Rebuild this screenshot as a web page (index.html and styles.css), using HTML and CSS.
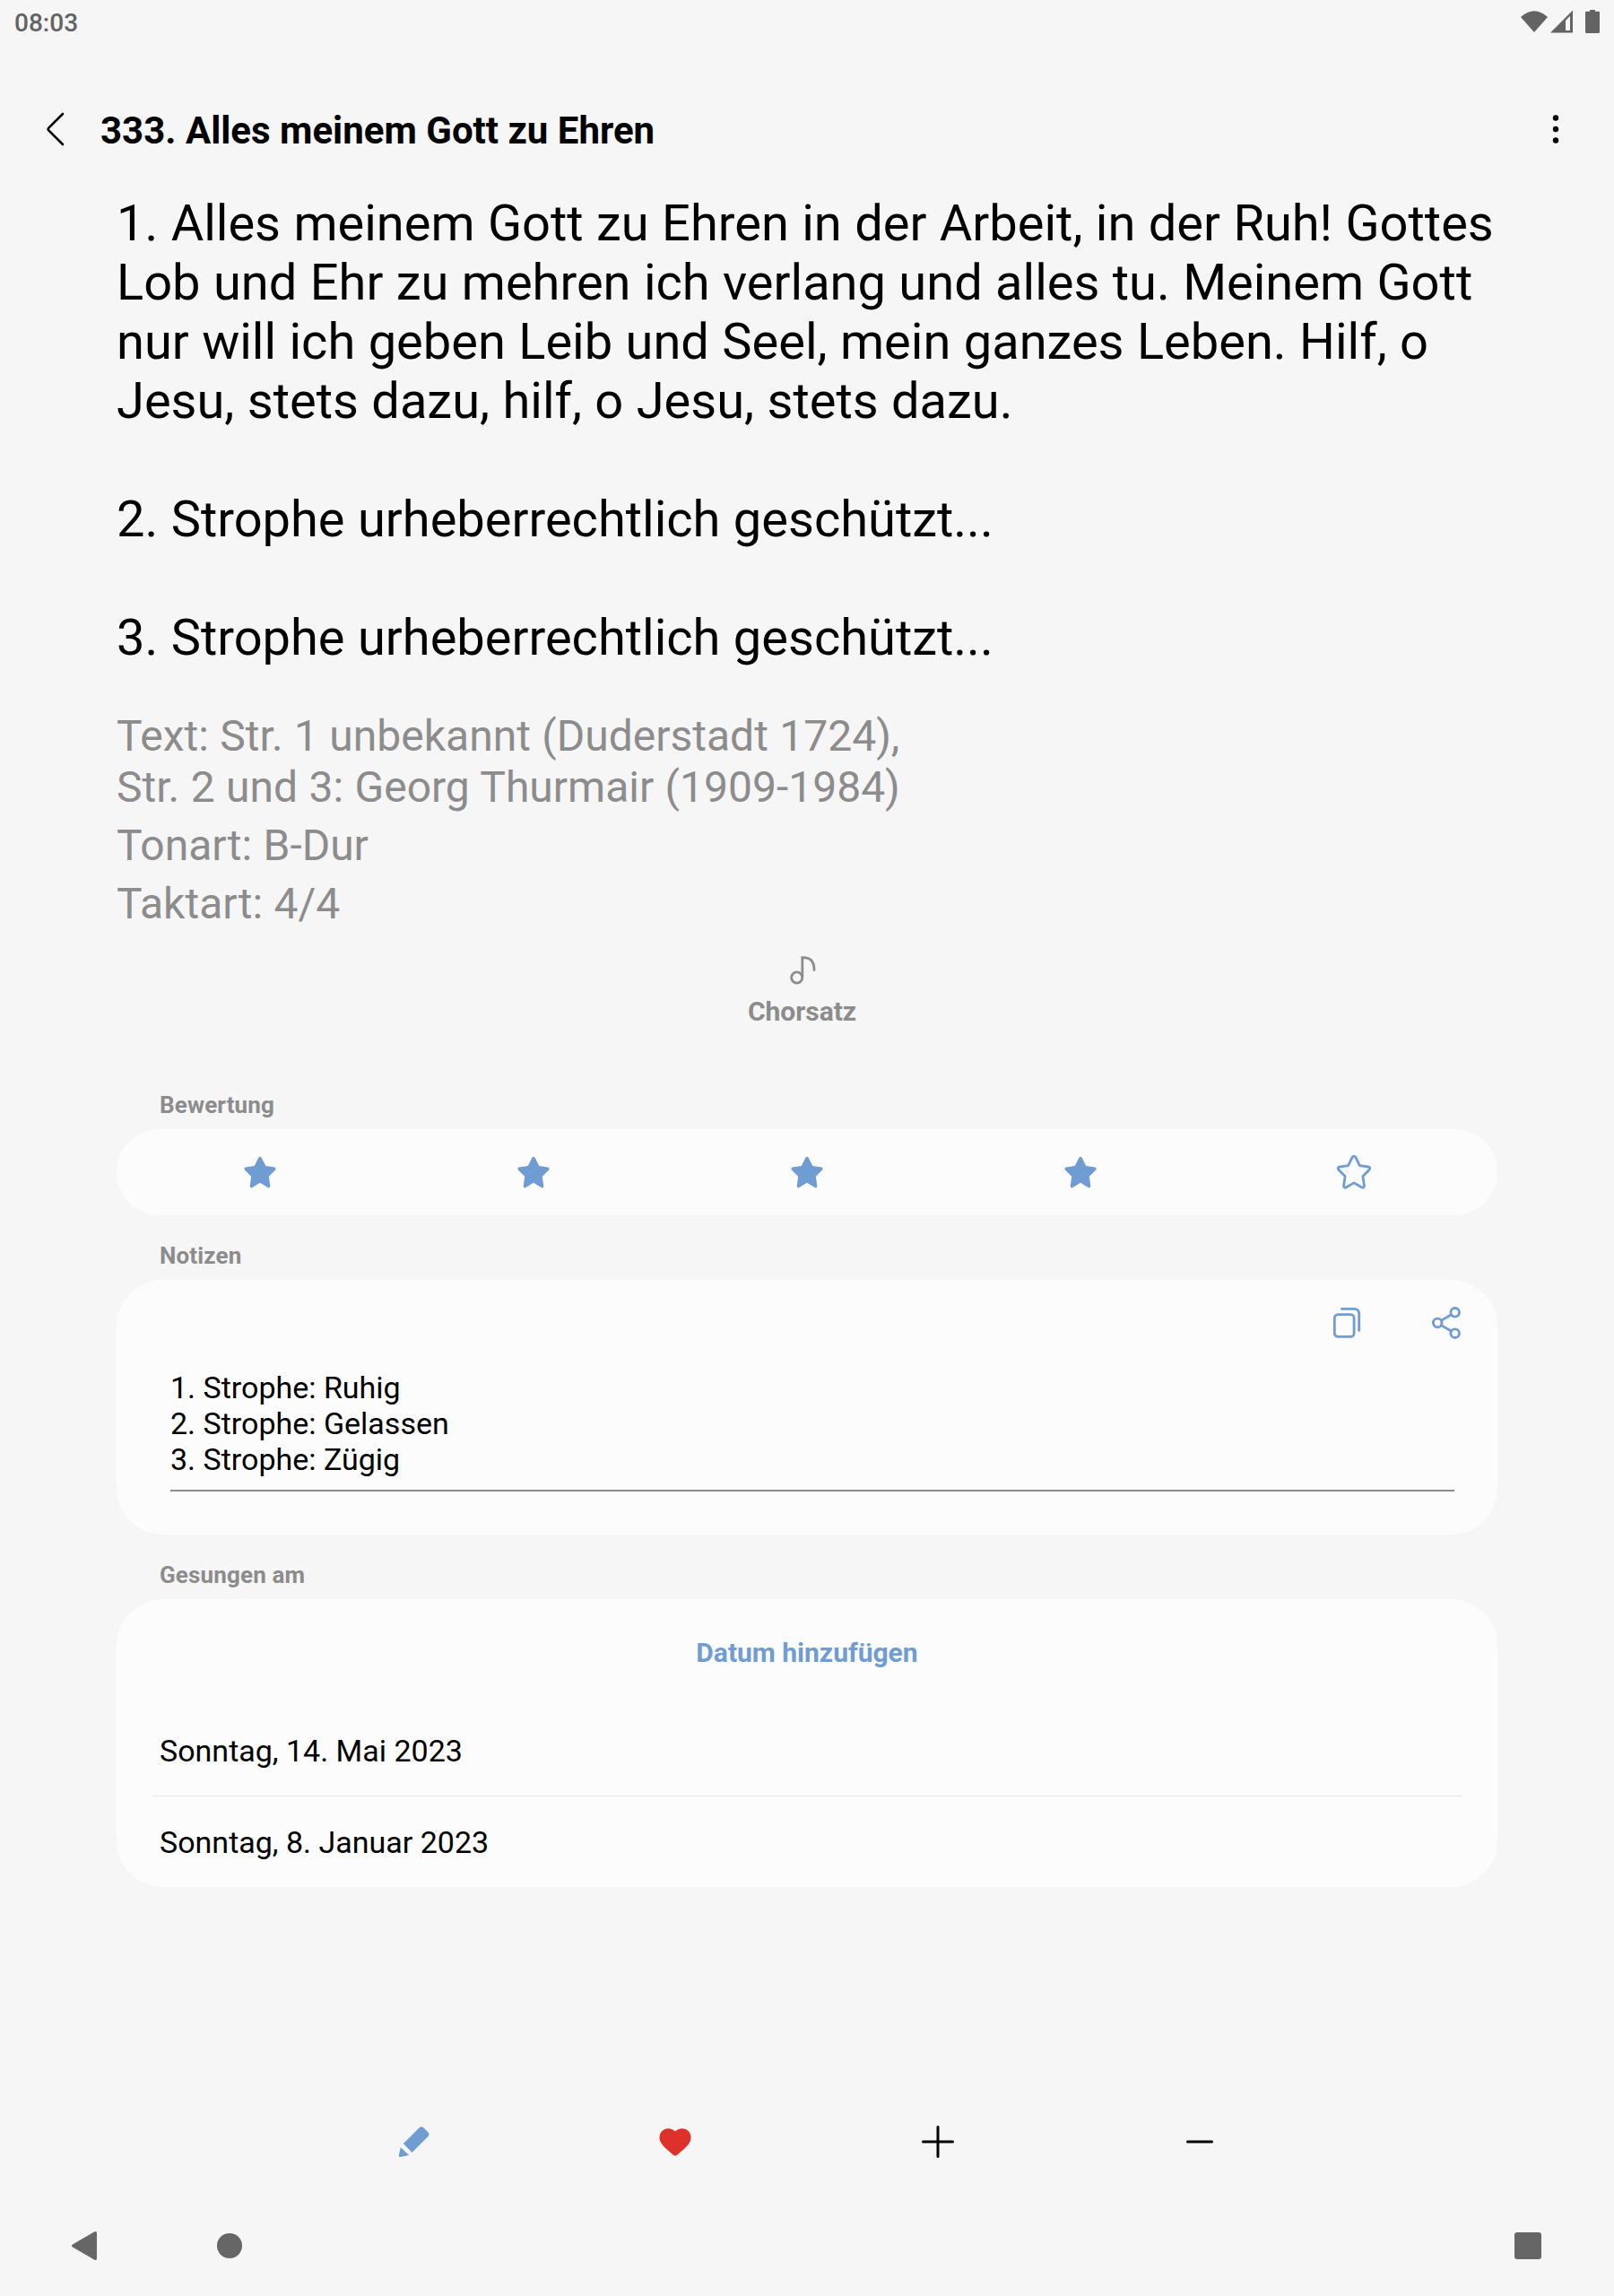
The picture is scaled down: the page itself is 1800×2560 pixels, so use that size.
FILE: index.html
```html
<!DOCTYPE html>
<html lang="de">
<head>
<meta charset="utf-8">
<title>333. Alles meinem Gott zu Ehren</title>
<link rel="stylesheet" href="styles.css">
</head>
<body>
<div class="screen">
  <header class="status">
    <span class="clock">08:03</span>
    <svg class="status-icons" width="90" height="28" viewBox="0 0 90 28" fill="#636363">
      <path d="M0 8Q15-5.5 30 8L15 25Z"/>
      <path d="M33 25.500L58 .5v25Z"/>
      <path d="M50 12l5-5.200V23h-5Z" fill="#f6f6f6"/>
      <path d="M73 1.800h4V0h6v1.800h4Q88 1.800 88 3v21.500q0 1.500-1.500 1.500h-13q-1.500 0-1.500-1.500V3Q72 1.800 73 1.800Z"/>
    </svg>
  </header>
  <div class="appbar">
    <svg class="back" width="24" height="40" viewBox="0 0 24 40"><path d="M20 3L4.300 18.600Q3 20 4.300 21.400L20 37" fill="none" stroke="#000" stroke-width="2.600" stroke-linecap="round"/></svg>
    <h1 class="title">333. Alles meinem Gott zu Ehren</h1>
    <svg class="more" width="8" height="34" viewBox="0 0 8 34"><circle cx="4" cy="4.500" r="3.200"/><circle cx="4" cy="17" r="3.200"/><circle cx="4" cy="29.500" r="3.200"/></svg>
  </div>
  <main class="content">
    <div class="lyrics">
      <p>1. Alles meinem Gott zu Ehren in der Arbeit, in der Ruh! Gottes<br>Lob und Ehr zu mehren ich verlang und alles tu. Meinem Gott<br>nur will ich geben Leib und Seel, mein ganzes Leben. Hilf, o<br>Jesu, stets dazu, hilf, o Jesu, stets dazu.</p>
      <p>2. Strophe urheberrechtlich geschützt...</p>
      <p>3. Strophe urheberrechtlich geschützt...</p>
    </div>
    <div class="meta">
      <p>Text: Str. 1 unbekannt (Duderstadt 1724),<br>Str. 2 und 3: Georg Thurmair (1909-1984)</p>
      <p>Tonart: B-Dur</p>
      <p>Taktart: 4/4</p>
    </div>
    <div class="choir">
      <svg width="32" height="34" viewBox="0 0 32 34" fill="none" stroke="#8c8c8c" stroke-width="2.800" stroke-linecap="round"><circle cx="9.700" cy="25" r="6.100"/><path d="M15.800 25V2.600Q29 1.800 29 16.500"/></svg>
      <span>Chorsatz</span>
    </div>

    <h2 class="label">Bewertung</h2>
    <section class="card rating">
      <svg class="star" viewBox="-20 -20 40 40"><use href="#star"/></svg>
      <svg class="star" viewBox="-20 -20 40 40"><use href="#star"/></svg>
      <svg class="star" viewBox="-20 -20 40 40"><use href="#star"/></svg>
      <svg class="star" viewBox="-20 -20 40 40"><path id="star" d="M-1.600-16.200Q0-18.500 1.600-16.200L6.300-7 16.300-5.400Q18.500-4.400 16.900-2.200L9.800 4.800 11.300 15.600Q11.200 17.900 9 17.300L0 11.800-9 17.300Q-11.200 17.900-11.300 15.600L-9.800 4.800-16.900-2.200Q-18.500-4.400-16.300-5.400L-6.300-7Z"/></svg>
      <svg class="star outline" viewBox="-20 -20 40 40"><path d="M-1.800-16.800Q0-19 1.800-16.800L6.400-7.400 16.500-5.900Q18.700-4.700 17.100-2.800L9.900 4.600 11.500 15.200Q11.200 17.800 9 17L0 11.900-9 17Q-11.200 17.800-11.500 15.200L-9.900 4.600-17.100-2.800Q-18.700-4.700-16.500-5.900L-6.400-7.400Z"/></svg>
    </section>

    <h2 class="label">Notizen</h2>
    <section class="card notes">
      <div class="note-actions">
        <svg width="32" height="36" viewBox="0 0 32 36"><rect x="2.300" y="8.600" width="21.800" height="24.800" rx="4"/><path d="M10.300 2.300H24Q29.700 2.300 29.700 8V26.500"/></svg>
        <svg width="32" height="36" viewBox="0 0 32 36"><circle cx="6.200" cy="18" r="4.800"/><circle cx="25.700" cy="6.300" r="4.800"/><circle cx="25.700" cy="29.700" r="4.800"/><path d="M10.400 15.400L21.500 8.800M10.400 20.600L21.500 27.200"/></svg>
      </div>
      <div class="note-text">1. Strophe: Ruhig<br>2. Strophe: Gelassen<br>3. Strophe: Zügig</div>
    </section>

    <h2 class="label">Gesungen am</h2>
    <section class="card dates">
      <div class="add">Datum hinzufügen</div>
      <div class="date">Sonntag, 14. Mai 2023</div>
      <div class="date">Sonntag, 8. Januar 2023</div>
    </section>
  </main>
  <div class="toolbar">
    <svg viewBox="-20 -20 40 40" fill="#6f9cd2"><path d="M-11.200 2.100L6.800-15.800Q9-17.700 11.200-15.800L16.500-10.400Q18.400-8.200 16.500-6L-1.500 12Z"/><path d="M-14.200 6.200L-4.800 15-14.700 17.100Q-16.300 17.100-16.200 15.600Z"/></svg>
    <svg viewBox="-20 -20 40 40" fill="#dd3129"><path d="M0-11.500C-9-19.500-20-11.500-17-1.500-16 1.500-14 4-11 7L-2.500 14.600Q0 16.400 2.500 14.600L11 7C14 4 16 1.500 17-1.500 20-11.500 9-19.500 0-11.500Z"/></svg>
    <svg viewBox="-20 -20 40 40" stroke="#000" stroke-width="3" stroke-linecap="round"><path d="M-16.500 0H16.500M0-16.500V16.500"/></svg>
    <svg viewBox="-20 -20 40 40" stroke="#000" stroke-width="3" stroke-linecap="round"><path d="M-13.500 0H13.500"/></svg>
  </div>
  <nav class="navbar">
    <svg width="28" height="32" viewBox="0 0 28 32"><path d="M25 .500Q28-1 28 2V30Q28 33 25 31.500L1 17.500Q-1 16 1 14.500Z"/></svg>
    <svg width="28" height="28" viewBox="0 0 28 28"><circle cx="14" cy="14" r="14"/></svg>
    <svg width="30" height="30" viewBox="0 0 30 30"><rect width="30" height="30" rx="3"/></svg>
  </nav>
</div>
</body>
</html>
```
FILE: styles.css
```css
* { box-sizing: border-box; margin: 0; padding: 0; }
body { background: #f6f6f6; color: #000; font-family: Roboto, "Liberation Sans", sans-serif; }
svg { display: block; flex: none; }
.screen { width: 1800px; height: 2560px; display: flex; flex-direction: column; overflow: hidden; }

.status { height: 50px; padding: 11px 14px 0 16px; display: flex; justify-content: space-between; align-items: flex-start; color: #636363; }
.clock { font-size: 28px; line-height: 30px; font-weight: 500; }

.appbar { height: 166px; padding: 74px 61px 0 50px; display: flex; align-items: flex-start; }
.back { margin-right: 38px; }
.title { flex: 1; padding-top: 1px; font-size: 42px; line-height: 42px; font-weight: 700; }
.more { margin-top: 3px; }

.content { padding: 0 130px; }
.lyrics { font-size: 56px; line-height: 66px; word-spacing: .5px; display: flex; flex-direction: column; gap: 66px; }
.meta { margin-top: 48px; height: 240px; font-size: 48px; line-height: 57px; word-spacing: .5px; color: #8c8c8c; display: flex; flex-direction: column; gap: 8px; }
.choir { height: 122px; padding-top: 33px; margin-right: 11px; display: flex; flex-direction: column; align-items: center; gap: 11px; font-size: 30px; line-height: 36px; font-weight: 700; color: #8c8c8c; }
.label { font-size: 26px; line-height: 30px; font-weight: 700; letter-spacing: .15px; color: #8c8c8c; padding: 30px 48px 0; height: 72px; }
.choir + .label { margin-top: 33px; }
.card { background: #fcfcfc; border-radius: 52px; }

.rating { height: 96px; padding: 0 7.500px; display: flex; align-items: center; justify-content: space-around; }
.star { width: 40px; height: 40px; fill: #6f9cd2; }
.outline { fill: none; stroke: #6f9cd2; stroke-width: 2.800px; stroke-linejoin: round; }

.notes { height: 284px; padding: 30px 48px 0 60px; }
.note-actions { display: flex; justify-content: flex-end; gap: 79px; margin-right: -7px; fill: none; stroke: #6f9cd2; stroke-width: 2.800px; stroke-linecap: round; }
.note-text { margin-top: 34px; height: 136px; font-size: 34px; line-height: 40px; border-bottom: 2px solid #8c8c8c; }

.dates { height: 321px; padding: 0 40px; }
.add { height: 119px; padding-top: 42px; text-align: center; font-size: 30px; line-height: 36px; font-weight: 700; color: #6f9cd2; }
.date { height: 100px; padding: 30px 8px 0; font-size: 34px; line-height: 40px; }
.date + .date { padding-top: 31px; border-top: 1px solid #e6e6e6; }

.toolbar { margin-top: auto; height: 76px; padding: 0 442px 0 441px; display: flex; justify-content: space-between; align-items: center; }
.toolbar svg { width: 40px; height: 40px; }
.navbar { height: 134px; padding: 22px 81px 0 80px; display: flex; align-items: center; }
.navbar svg { fill: #666; margin-right: 134px; }
.navbar svg:last-child { margin: 0 0 0 auto; }
```
